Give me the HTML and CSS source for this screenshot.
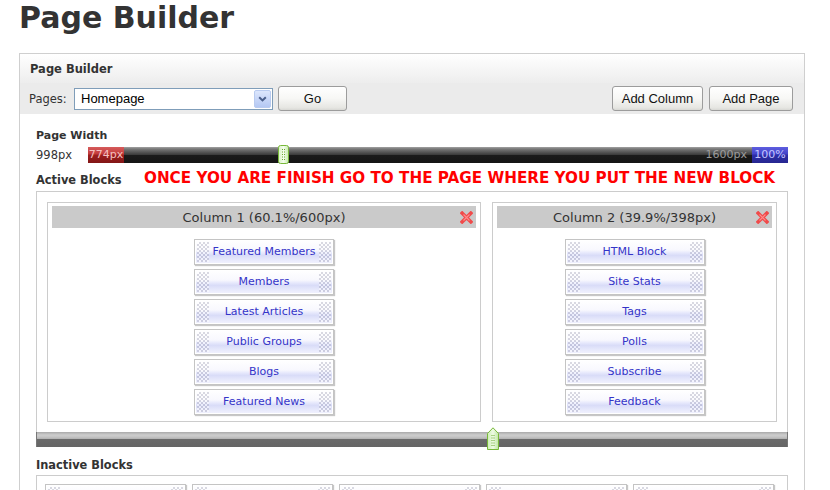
FILE: index.html
```html
<!DOCTYPE html>
<html>
<head>
<meta charset="utf-8">
<title>Page Builder</title>
<link rel="stylesheet" href="styles.css">
</head>
<body>
<h1 class="title">Page Builder</h1>
<div class="panel">
  <div class="panel-head">Page Builder</div>
  <div class="toolbar">
    <span class="tb-label">Pages:</span>
    <div class="select">
      <span class="select-text">Homepage</span>
      <span class="select-btn">
        <svg width="17" height="18" viewBox="0 0 17 18"><defs><linearGradient id="sbg" x1="0" y1="0" x2="0" y2="1"><stop offset="0" stop-color="#dde7fd"/><stop offset="1" stop-color="#b3c7f3"/></linearGradient></defs><rect x=".5" y=".5" width="16" height="17" rx="1.5" fill="url(#sbg)" stroke="#b9cbf0"/><path d="M5.2 7.2L8.5 10.4L11.8 7.2" fill="none" stroke="#4a5f8c" stroke-width="2"/></svg>
      </span>
    </div>
    <button class="btn btn-go">Go</button>
    <div class="tb-spacer"></div>
    <button class="btn btn-col">Add Column</button>
    <button class="btn btn-page">Add Page</button>
  </div>
  <div class="panel-body">
    <div class="label">Page Width</div>
    <div class="width-row">
      <span class="width-val">998px</span>
      <div class="wslider">
        <span class="ws-min">774px</span>
        <span class="ws-max">1600px</span>
        <span class="ws-pct">100%</span>
        <svg class="ws-handle" width="11" height="19" viewBox="0 0 11 19"><defs><linearGradient id="hg1" x1="0" y1="0" x2="1" y2="0"><stop offset="0" stop-color="#d6f2c0"/><stop offset=".5" stop-color="#f4fdee"/><stop offset="1" stop-color="#c6ebab"/></linearGradient></defs><rect x=".5" y=".5" width="10" height="18" rx="2" fill="url(#hg1)" stroke="#78b83a"/><g fill="#68a82c"><rect x="4" y="4" width="1" height="1"/><rect x="6" y="4" width="1" height="1"/><rect x="4" y="6.5" width="1" height="1"/><rect x="6" y="6.5" width="1" height="1"/><rect x="4" y="9" width="1" height="1"/><rect x="6" y="9" width="1" height="1"/><rect x="4" y="11.5" width="1" height="1"/><rect x="6" y="11.5" width="1" height="1"/><rect x="4" y="14" width="1" height="1"/><rect x="6" y="14" width="1" height="1"/></g></svg>
      </div>
    </div>
    <div class="active-row">
      <span class="label label-fixed">Active Blocks</span>
      <span class="notice">ONCE YOU ARE FINISH GO TO THE PAGE WHERE YOU PUT THE NEW BLOCK</span>
    </div>
    <div class="active-box">
      <div class="col col-1">
        <div class="col-head">
          <span class="col-title">Column 1 (60.1%/600px)</span>
          <svg class="x-icon" width="13" height="13" viewBox="0 0 13 13"><path d="M2.2 2.2L10.8 10.8M10.8 2.2L2.2 10.8" stroke="#f04a4a" stroke-width="3.6" stroke-linecap="square"/><path d="M3.5 3.5L9.5 9.5M9.5 3.5L3.5 9.5" stroke="#ff8c8c" stroke-width="1.1"/></svg>
        </div>
        <div class="blocks">
          <div class="block"><span class="grip"></span><span class="bt">Featured Members</span><span class="grip"></span></div>
          <div class="block"><span class="grip"></span><span class="bt">Members</span><span class="grip"></span></div>
          <div class="block"><span class="grip"></span><span class="bt">Latest Articles</span><span class="grip"></span></div>
          <div class="block"><span class="grip"></span><span class="bt">Public Groups</span><span class="grip"></span></div>
          <div class="block"><span class="grip"></span><span class="bt">Blogs</span><span class="grip"></span></div>
          <div class="block"><span class="grip"></span><span class="bt">Featured News</span><span class="grip"></span></div>
        </div>
      </div>
      <div class="col col-2">
        <div class="col-head">
          <span class="col-title">Column 2 (39.9%/398px)</span>
          <svg class="x-icon" width="13" height="13" viewBox="0 0 13 13"><path d="M2.2 2.2L10.8 10.8M10.8 2.2L2.2 10.8" stroke="#f04a4a" stroke-width="3.6" stroke-linecap="square"/><path d="M3.5 3.5L9.5 9.5M9.5 3.5L3.5 9.5" stroke="#ff8c8c" stroke-width="1.1"/></svg>
        </div>
        <div class="blocks">
          <div class="block"><span class="grip"></span><span class="bt">HTML Block</span><span class="grip"></span></div>
          <div class="block"><span class="grip"></span><span class="bt">Site Stats</span><span class="grip"></span></div>
          <div class="block"><span class="grip"></span><span class="bt">Tags</span><span class="grip"></span></div>
          <div class="block"><span class="grip"></span><span class="bt">Polls</span><span class="grip"></span></div>
          <div class="block"><span class="grip"></span><span class="bt">Subscribe</span><span class="grip"></span></div>
          <div class="block"><span class="grip"></span><span class="bt">Feedback</span><span class="grip"></span></div>
        </div>
      </div>
    </div>
    <div class="cslider">
      <svg class="cs-handle" width="12" height="23" viewBox="0 0 12 23"><defs><linearGradient id="hg2" x1="0" y1="0" x2="1" y2="0"><stop offset="0" stop-color="#cdeeb4"/><stop offset=".5" stop-color="#eefbe4"/><stop offset="1" stop-color="#bfe6a2"/></linearGradient></defs><path d="M6 .8L11.5 6.5V22.5H.5V6.5Z" fill="url(#hg2)" stroke="#78b83a" stroke-linejoin="round"/><g fill="#68a82c"><rect x="4.5" y="8" width="1" height="1"/><rect x="6.5" y="8" width="1" height="1"/><rect x="4.5" y="10.5" width="1" height="1"/><rect x="6.5" y="10.5" width="1" height="1"/><rect x="4.5" y="13" width="1" height="1"/><rect x="6.5" y="13" width="1" height="1"/><rect x="4.5" y="15.5" width="1" height="1"/><rect x="6.5" y="15.5" width="1" height="1"/><rect x="4.5" y="18" width="1" height="1"/><rect x="6.5" y="18" width="1" height="1"/></g></svg>
    </div>
    <div class="label label-inactive">Inactive Blocks</div>
    <div class="inactive-box">
      <div class="block block-wide"><span class="grip"></span><span class="bt"></span><span class="grip"></span></div>
      <div class="block block-wide"><span class="grip"></span><span class="bt"></span><span class="grip"></span></div>
      <div class="block block-wide"><span class="grip"></span><span class="bt"></span><span class="grip"></span></div>
      <div class="block block-wide"><span class="grip"></span><span class="bt"></span><span class="grip"></span></div>
      <div class="block block-wide"><span class="grip"></span><span class="bt"></span><span class="grip"></span></div>
    </div>
  </div>
</div>
</body>
</html>
```

FILE: styles.css
```css
* { box-sizing: border-box; }
html, body { margin: 0; padding: 0; background: #fff; }
body {
  font-family: "DejaVu Sans", Verdana, sans-serif;
  color: #333;
  width: 830px;
  height: 490px;
  overflow: hidden;
}
.title {
  margin: 0 0 18px 19px;
  font-size: 30px;
  line-height: 35px;
  font-weight: bold;
  color: #333;
}
.panel {
  margin-left: 19px;
  width: 786px;
  border: 1px solid #cfcfcf;
  border-bottom: none;
  height: 440px;
}
.panel-head {
  height: 29px;
  padding-left: 10px;
  font-size: 11.5px;
  font-weight: bold;
  line-height: 30px;
  color: #333;
  background: linear-gradient(#ffffff, #f6f6f6 50%, #ededed);
}
.toolbar {
  height: 31px;
  display: flex;
  align-items: center;
  padding: 0 11px 0 9px;
  background: #ebebeb;
}
.tb-label {
  width: 45px;
  font-size: 11.5px;
  color: #333;
}
.select {
  width: 199px;
  height: 22px;
  border: 1px solid #7f9db9;
  background: #fff;
  display: flex;
  align-items: center;
  padding-left: 6px;
  font-family: "Liberation Sans", Arial, sans-serif;
  font-size: 13px;
  color: #000;
}
.select-btn { margin-left: auto; margin-right: 1px; display: flex; }
.btn {
  height: 25px;
  padding: 0;
  border: 1px solid #9c9c9c;
  border-radius: 3px;
  background: linear-gradient(#ffffff, #f7f7f5 50%, #e6e6e2 90%, #d8d8d4);
  font-family: "Liberation Sans", Arial, sans-serif;
  font-size: 13px;
  color: #111;
}
.btn-go { width: 69px; margin-left: 5px; }
.tb-spacer { flex: 1; }
.btn-col { width: 91px; }
.btn-page { width: 84px; margin-left: 6px; }

.panel-body { padding: 14px 16px 0 16px; }
.label {
  font-size: 11px;
  font-weight: bold;
  line-height: 16px;
  color: #333;
}
.width-row {
  display: flex;
  align-items: center;
  margin-top: 3px;
  height: 16px;
}
.width-val { width: 52px; font-size: 11.5px; color: #333; }
.wslider {
  flex: 1;
  height: 16px;
  position: relative;
  display: flex;
  background: linear-gradient(#a2a2a2 0, #787878 2px, #4c4c4c 6px, #383838 8px, #1a1a1a 8px, #151515 100%);
  font-size: 11px;
  line-height: 16px;
}
.ws-min {
  width: 36px;
  text-align: center;
  color: #f3c0c0;
  background: linear-gradient(#d65c5c 0, #c23a3a 7px, #9c1e1e 8px, #821616 100%);
}
.ws-max { margin-left: auto; padding-right: 5px; color: #9c9c9c; }
.ws-pct {
  width: 36px;
  text-align: center;
  color: #c4c4ff;
  background: linear-gradient(#5e5ee0 0, #4343c8 7px, #2e2ea8 8px, #262690 100%);
}
.ws-handle { position: absolute; left: 190px; top: -2px; }

.active-row {
  display: flex;
  align-items: flex-start;
  margin-top: 7px;
  height: 20px;
}
.label-fixed { width: 108px; line-height: 20px; font-size: 11.4px; }
.notice {
  font-size: 15.2px;
  font-weight: bold;
  line-height: 16px;
  color: #ff0000;
  white-space: nowrap;
}
.active-box {
  margin-top: 1px;
  border: 1px solid #cccccc;
  border-bottom: none;
  padding: 10px;
  display: flex;
  gap: 11px;
}
.col {
  border: 1px solid #cccccc;
  padding: 3px 4px 6px 4px;
  background: #fff;
}
.col-1 { width: 434px; }
.col-2 { flex: 1; }
.col-head {
  height: 22px;
  background: #cacaca;
  display: grid;
  grid-template-columns: 1fr auto 1fr;
  align-items: center;
  font-size: 13px;
  color: #333;
}
.col-title { grid-column: 2; }
.x-icon { grid-column: 3; justify-self: end; margin-right: 3px; }
.blocks {
  margin-top: 11px;
  display: flex;
  flex-direction: column;
  align-items: center;
  gap: 4px;
}
.block {
  width: 140px;
  height: 26px;
  border: 1px solid #c4c4c4;
  box-shadow: inset 0 0 0 1px #fff, 1px 1px 1px rgba(0, 0, 0, 0.22);
  background: linear-gradient(#ffffff 0%, #f8f8fe 42%, #e6e8fc 54%, #d9dcf8 64%, #e8eafc 84%, #f3f3fe 100%);
  display: flex;
  align-items: center;
  padding: 2px;
  font-size: 11px;
  color: #3434c8;
  flex: none;
}
.grip {
  width: 12px;
  height: 20px;
  flex: none;
  background: repeating-conic-gradient(rgba(140, 140, 165, 0.32) 0 25%, rgba(255, 255, 255, 0.45) 0 50%) 0 0 / 4px 4px;
}
.bt {
  flex: 1;
  text-align: center;
  line-height: 16px;
  white-space: nowrap;
}
.cslider {
  height: 15px;
  position: relative;
  border-left: 1px solid #777;
  border-right: 1px solid #777;
  background: linear-gradient(#a9a9a9 0, #cdcdcd 3px, #c4c4c4 5px, #b0b0b0 7px, #6a6a6a 7px, #656565 100%);
}
.cs-handle { position: absolute; left: 450px; top: -5px; }
.label-inactive { margin-top: 8px; line-height: 20px; font-size: 11.4px; }
.inactive-box {
  border: 1px solid #cccccc;
  padding: 8px;
  display: flex;
  gap: 6px;
}
.block-wide { width: 141px; }
```
